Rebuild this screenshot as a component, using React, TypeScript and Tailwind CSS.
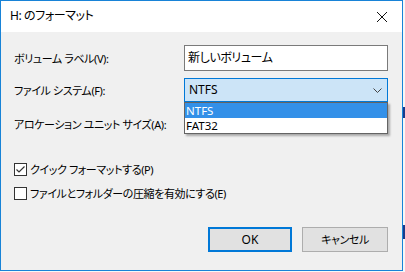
import React, { useState } from "react";

const font = "font-['Noto_Sans','Noto_Sans_CJK_JP',sans-serif] [font-feature-settings:'palt'] text-[11px] tracking-[-0.4px] leading-none text-black whitespace-nowrap";

const Checkbox = ({ checked, label, onToggle }: { checked: boolean; label: string; onToggle: () => void }) => (
  <div className="flex items-center h-[16px] gap-[3px] cursor-default" onClick={onToggle}>
    <div className="w-[13px] h-[13px] border border-[#333333] bg-white flex items-center justify-center">
      {checked && (
        <svg width="11" height="11" viewBox="0 0 11 11">
          <path d="M1.5 5.5 L4 8 L9.5 2.5" fill="none" stroke="#333333" strokeWidth="1.2" />
        </svg>
      )}
    </div>
    <span>{label}</span>
  </div>
);

export default function App() {
  const [quick, setQuick] = useState(true);
  const [compress, setCompress] = useState(false);
  const [fs, setFs] = useState("NTFS");

  return (
    <div className={`w-[405px] h-[272px] bg-[#f7f7f7] relative overflow-hidden ${font}`}>
      <div className="absolute right-0 top-[107px] w-[2px] h-[11px] bg-[#1a3a8a]" />
      <div className="absolute right-0 top-[225px] w-[2px] h-[14px] bg-[#1a3a8a]" />
      <div className="w-[403px] h-[271px] border border-[#1883d7] flex flex-col bg-[#f0f0f0]">
        <div className="h-[31px] bg-white flex items-center justify-between pl-[9px] pr-[14px] shrink-0">
          <span className="mt-[-1px] text-[12px]">H: のフォーマット</span>
          <svg width="12" height="12" viewBox="0 0 12 12">
            <path d="M1 1 L11 11 M11 1 L1 11" stroke="#111" strokeWidth="1" />
          </svg>
        </div>
        <div className="flex flex-col pl-[13px] pr-[13px] pt-[13px]">
          <div className="flex items-center h-[26px]">
            <span className="w-[170px]">ボリューム ラベル(V):</span>
            <div className="w-[204px] h-[26px] border border-[#7a7a7a] bg-white flex items-center pl-[3px] text-[12px]">
              新しいボリューム
            </div>
          </div>
          <div className="flex items-center h-[24px] mt-[7px]">
            <span className="w-[170px]">ファイル システム(F):</span>
            <div className="relative w-[204px] h-[24px] tracking-normal">
              <div className="w-full h-full border border-[#0078d7] bg-[#cce4f7] flex items-center justify-between pl-[4px] pr-[5px] text-[12px]">
                <span>{fs}</span>
                <svg width="9" height="5" viewBox="0 0 9 5">
                  <path d="M0.5 0.5 L4.5 4.5 L8.5 0.5" fill="none" stroke="#444" strokeWidth="1" />
                </svg>
              </div>
              <div className="absolute left-0 top-full w-[204px] border border-[#646464] bg-white shadow-[2px_2px_2px_rgba(0,0,0,0.3)] z-10 text-[11.5px]">
                {["NTFS", "FAT32"].map((v) => (
                  <div
                    key={v}
                    onClick={() => setFs(v)}
                    className={`h-[15px] flex items-center pl-[1px] ${v === fs ? "bg-[#3390e8] text-white" : ""}`}
                  >
                    {v}
                  </div>
                ))}
              </div>
            </div>
          </div>
          <div className="flex items-center h-[24px] mt-[10px]">
            <span className="w-[170px]">アロケーション ユニット サイズ(A):</span>
          </div>
          <div className="mt-[25px]">
            <Checkbox checked={quick} label="クイック フォーマットする(P)" onToggle={() => setQuick(!quick)} />
          </div>
          <div className="mt-[8px]">
            <Checkbox checked={compress} label="ファイルとフォルダーの圧縮を有効にする(E)" onToggle={() => setCompress(!compress)} />
          </div>
          <div className="flex justify-end gap-[10px] mt-[26px] pr-[1px]">
            <button className="w-[84px] h-[25px] border-2 border-[#0078d7] bg-[#e1e1e1] flex items-center justify-center text-[12px] tracking-normal">
              OK
            </button>
            <button className="w-[86px] h-[25px] border border-[#adadad] bg-[#e1e1e1] flex items-center justify-center">
              キャンセル
            </button>
          </div>
        </div>
      </div>
    </div>
  );
}
